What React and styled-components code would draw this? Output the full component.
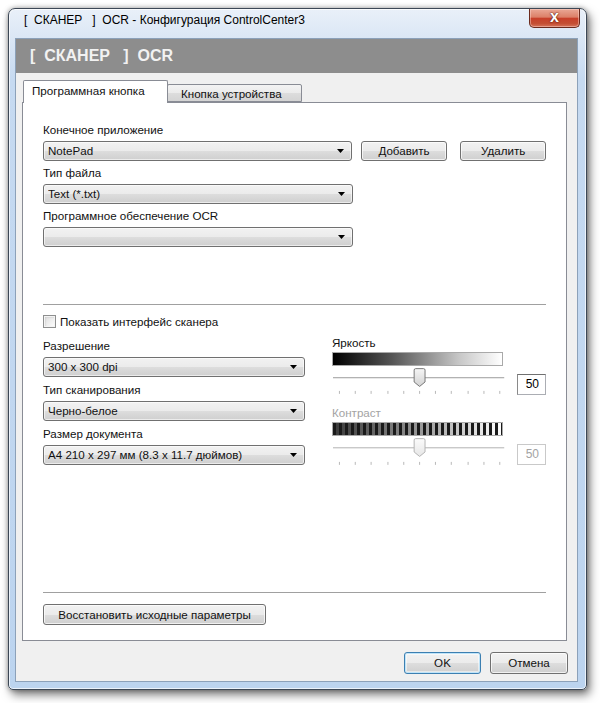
import React from 'react';
import styled, { createGlobalStyle } from 'styled-components';

const Global = createGlobalStyle`
  html, body { margin: 0; padding: 0; background: #fff; }
  body { font-family: "Liberation Sans", Arial, sans-serif; font-size: 11.6px; color: #111; }
  #root { width: 600px; height: 703px; }
  * { box-sizing: border-box; }
`;

const Stage = styled.div`
  width: 600px;
  height: 703px;
  padding: 8px 0 0 8px;
  background: #fff;
`;

const Window = styled.div`
  width: 579px;
  height: 682px;
  border: 1px solid #3d4856;
  border-radius: 7px 7px 5px 5px;
  background: linear-gradient(180deg, #e9f0f9 0px, #dbe7f5 28px, #c6daf1 70px, #bcd4ef 100%);
  box-shadow: 3px 5px 10px rgba(0, 0, 0, 0.5), 0 0 5px rgba(0, 0, 0, 0.35), inset 0 0 0 1px rgba(255, 255, 255, 0.7);
  display: flex;
  flex-direction: column;
`;

const TitleBar = styled.div`
  height: 29px;
  display: flex;
  align-items: flex-start;
  padding-left: 15px;
`;

const TitleText = styled.div`
  line-height: 22px;
  font-size: 12px;
  color: #000;
  white-space: pre;
`;

const CloseButton = styled.div`
  margin-left: auto;
  margin-right: 6px;
  width: 51px;
  height: 19px;
  border: 1px solid #6b2a1d;
  border-top: none;
  border-radius: 0 0 5px 5px;
  background: linear-gradient(180deg, #eaa896 0%, #dc8068 45%, #c8402a 52%, #c44e33 80%, #d5735a 100%);
  box-shadow: inset 0 0 0 1px rgba(255, 220, 210, 0.45);
  display: flex;
  align-items: center;
  justify-content: center;
  color: #fff;
  font-weight: bold;
  font-size: 16px;
  line-height: 1;
  padding-bottom: 3px;
  text-shadow: 0 0 2px #5a1a0c, 0 0 1px #5a1a0c;
`;

const Client = styled.div`
  flex: 1;
  margin: 0 8px 7px 6px;
  background: #f0f0f0;
  border: 1px solid #8ca1b9;
  display: flex;
  flex-direction: column;
`;

const Header = styled.div`
  height: 34px;
  background: #8d8d8d;
  color: #f2f2f2;
  font-weight: bold;
  font-size: 16px;
  line-height: 34px;
  padding-left: 14px;
  white-space: pre;
`;

const TabsArea = styled.div`
  padding: 7px 10px 0 6px;
`;

const TabStrip = styled.div`
  height: 22px;
  display: flex;
  align-items: flex-end;
  position: relative;
  z-index: 1;
`;

const Tab = styled.div`
  height: ${p => (p.$active ? '23px' : '18px')};
  margin-bottom: ${p => (p.$active ? '-1px' : '0')};
  margin-left: ${p => (p.$active ? '1px' : '-1px')};
  width: ${p => p.$w}px;
  border: 1px solid #898c95;
  border-bottom: ${p => (p.$active ? 'none' : '1px solid #898c95')};
  border-radius: 2px 2px 0 0;
  background: ${p => (p.$active ? '#fff' : 'linear-gradient(180deg, #f3f3f3 0%, #ebebeb 50%, #dddddd 51%, #d4d4d4 100%)')};
  padding: ${p => (p.$active ? '3px 0 0 8px' : '2px 0 0 13px')};
  line-height: 14px;
  white-space: nowrap;
`;

const Panel = styled.div`
  height: 539px;
  border: 1px solid #898c95;
  background: #fff;
  padding: 19px 20px 15px 20px;
  display: flex;
  flex-direction: column;
`;

const Label = styled.div`
  line-height: 15px;
  height: 15px;
  margin-bottom: 4px;
  color: ${p => (p.$disabled ? '#a3a3a3' : '#111')};
  white-space: nowrap;
`;

const Row = styled.div`
  display: flex;
  align-items: center;
  margin-top: ${p => p.$mt || 0}px;
  margin-bottom: ${p => p.$mb || 0}px;
`;

const SelectBox = styled.div`
  width: ${p => p.$w}px;
  height: 20px;
  border: 1px solid #707070;
  border-radius: 3px;
  background: linear-gradient(180deg, #f2f2f2 0%, #ebebeb 50%, #dddddd 51%, #cfcfcf 100%);
  box-shadow: inset 0 0 0 1px rgba(255, 255, 255, 0.6);
  display: flex;
  align-items: center;
  padding: 0 7px 0 4px;
  margin-bottom: ${p => p.$mb || 0}px;
`;

const SelectText = styled.span`
  flex: 1;
  white-space: nowrap;
  overflow: hidden;
  line-height: 18px;
`;

const Button = styled.div`
  width: ${p => p.$w}px;
  height: ${p => p.$h || 20}px;
  margin-left: ${p => p.$ml || 0}px;
  border: 1px solid ${p => (p.$default ? '#3c7fb1' : '#707070')};
  border-radius: 3px;
  background: linear-gradient(180deg, #f2f2f2 0%, #ebebeb 50%, #dddddd 51%, #cfcfcf 100%);
  box-shadow: ${p => (p.$default ? 'inset 0 0 0 1px #bfe4f9, inset 0 0 0 2px rgba(255,255,255,0.5)' : 'inset 0 0 0 1px rgba(255,255,255,0.7)')};
  display: flex;
  align-items: center;
  justify-content: center;
  line-height: 16px;
  white-space: nowrap;
`;

const Divider = styled.div`
  height: 1px;
  background: #a0a0a0;
  margin-top: ${p => p.$mt || 0}px;
`;

const CheckRow = styled.label`
  display: flex;
  align-items: center;
  margin-top: 10px;
  height: 13px;
  gap: 4px;
`;

const CheckBox = styled.span`
  width: 13px;
  height: 13px;
  border: 1px solid #8e8f8f;
  background: linear-gradient(135deg, #dcdcdc 0%, #f4f4f4 70%, #fff 100%);
  box-shadow: inset 0 0 0 1px #f4f4f4, inset 1px 1px 2px #bcbcbc;
`;

const Columns = styled.div`
  display: grid;
  grid-template-columns: 262px 214px;
  column-gap: 27px;
  margin-top: 7px;
  align-items: start;
`;

const LeftCol = styled.div`
  padding-top: 3px;
  display: flex;
  flex-direction: column;
`;

const RightCol = styled.div`
  display: flex;
  flex-direction: column;
`;

const BrightBar = styled.div`
  width: 171px;
  height: 14px;
  margin-top: -2px;
  border: 1px solid #a9a9a9;
  background: linear-gradient(90deg, #000 0%, #555 35%, #c8c8c8 75%, #fff 100%);
`;

const ContrastBar = styled.div`
  width: 171px;
  height: 14px;
  margin-top: -2px;
  border: 1px solid #a9a9a9;
  background:
    repeating-linear-gradient(90deg, #1a1a1a 0 3px, transparent 3px 6px),
    linear-gradient(90deg, #3a3a3a 0%, #8a8a8a 45%, #ffffff 100%);
`;

const SliderRow = styled.div`
  display: flex;
  align-items: flex-start;
  height: 30px;
  margin-bottom: ${p => p.$mb || 0}px;
`;

const ValueBox = styled.div`
  width: 29px;
  height: 21px;
  margin-left: 12px;
  margin-top: 8px;
  border: 1px solid ${p => (p.$disabled ? '#c9c9c9' : '#abadb3')};
  border-top-color: ${p => (p.$disabled ? '#c9c9c9' : '#707070')};
  border-left-color: ${p => (p.$disabled ? '#c9c9c9' : '#8a8a8a')};
  background: #fff;
  color: ${p => (p.$disabled ? '#a3a3a3' : '#000')};
  text-align: right;
  padding-right: 6px;
  line-height: 19px;
  font-size: 12px;
`;

const Spacer = styled.div`
  flex: 1;
`;

const Footer = styled.div`
  flex: 1;
  display: flex;
  justify-content: flex-end;
  align-items: flex-start;
  padding: 11px 9px 0 0;
  gap: 9px;
`;

const Arrow = () => (
  <svg width="7" height="4" viewBox="0 0 7 4">
    <path d="M0 0 H7 L3.5 4 Z" fill="#000" />
  </svg>
);

const Select = ({ w, mb, children }) => (
  <SelectBox $w={w} $mb={mb}>
    <SelectText>{children}</SelectText>
    <Arrow />
  </SelectBox>
);

const Slider = ({ disabled }) => {
  const ticks = Array.from({ length: 11 }, (_, i) => 7 + Math.round(i * 16.2));
  const stroke = disabled ? '#b4b4b4' : '#777';
  const gid = disabled ? 'thumbD' : 'thumbE';
  return (
    <svg width="175" height="30" viewBox="0 0 175 30">
      <defs>
        <linearGradient id={gid} x1="0" y1="0" x2="0" y2="1">
          <stop offset="0" stopColor={disabled ? '#fbfbfb' : '#f6f6f6'} />
          <stop offset="1" stopColor={disabled ? '#e6e6e6' : '#d2d2d2'} />
        </linearGradient>
      </defs>
      <rect x="1" y="11" width="173" height="1" fill={disabled ? '#c8c8c8' : '#b0b0b0'} />
      <rect x="1" y="12" width="173" height="1" fill="#e8e8e8" />
      {ticks.map(x => (
        <rect key={x} x={x} y={disabled ? 26 : 25} width="1" height="3" fill="#b8b8b8" />
      ))}
      <path
        d="M84.5 2.5 h8 a1.5 1.5 0 0 1 1.5 1.5 v12 l-5.5 4.5 l-5.5 -4.5 v-12 a1.5 1.5 0 0 1 1.5 -1.5 z"
        fill={`url(#${gid})`}
        stroke={stroke}
        strokeWidth="1"
      />
    </svg>
  );
};

export default function App() {
  return (
    <Stage>
      <Global />
      <Window>
        <TitleBar>
          <TitleText>{'[  СКАНЕР   ]  OCR - Конфигурация ControlCenter3'}</TitleText>
          <CloseButton>x</CloseButton>
        </TitleBar>
        <Client>
          <Header>{'[  СКАНЕР   ]  OCR'}</Header>
          <TabsArea>
            <TabStrip>
              <Tab $active $w={145}>Программная кнопка</Tab>
              <Tab $w={135}>Кнопка устройства</Tab>
            </TabStrip>
            <Panel>
              <Label>Конечное приложение</Label>
              <Row $mb={4}>
                <Select w={310}>NotePad</Select>
                <Button $w={87} $ml={9}>Добавить</Button>
                <Button $w={86} $ml={13}>Удалить</Button>
              </Row>
              <Label>Тип файла</Label>
              <Select w={310} mb={4}>Text (*.txt)</Select>
              <Label>Программное обеспечение OCR</Label>
              <Select w={310}>{''}</Select>

              <Divider $mt={57} />

              <CheckRow>
                <CheckBox />
                <span>Показать интерфейс сканера</span>
              </CheckRow>

              <Columns>
                <LeftCol>
                  <Label>Разрешение</Label>
                  <Select w={262} mb={5}>300 x 300 dpi</Select>
                  <Label>Тип сканирования</Label>
                  <Select w={262} mb={5}>Черно-белое</Select>
                  <Label>Размер документа</Label>
                  <Select w={262}>A4 210 x 297 мм (8.3 x 11.7 дюймов)</Select>
                </LeftCol>
                <RightCol>
                  <Label>Яркость</Label>
                  <BrightBar />
                  <SliderRow $mb={9}>
                    <Slider />
                    <ValueBox>50</ValueBox>
                  </SliderRow>
                  <Label $disabled>Контраст</Label>
                  <ContrastBar />
                  <SliderRow>
                    <Slider disabled />
                    <ValueBox $disabled>50</ValueBox>
                  </SliderRow>
                </RightCol>
              </Columns>

              <Spacer />
              <Divider />
              <Row $mt={11}>
                <Button $w={223} $h={21}>Восстановить исходные параметры</Button>
              </Row>
            </Panel>
          </TabsArea>
          <Footer>
            <Button $w={77} $h={22} $default>OK</Button>
            <Button $w={78} $h={22}>Отмена</Button>
          </Footer>
        </Client>
      </Window>
    </Stage>
  );
}
